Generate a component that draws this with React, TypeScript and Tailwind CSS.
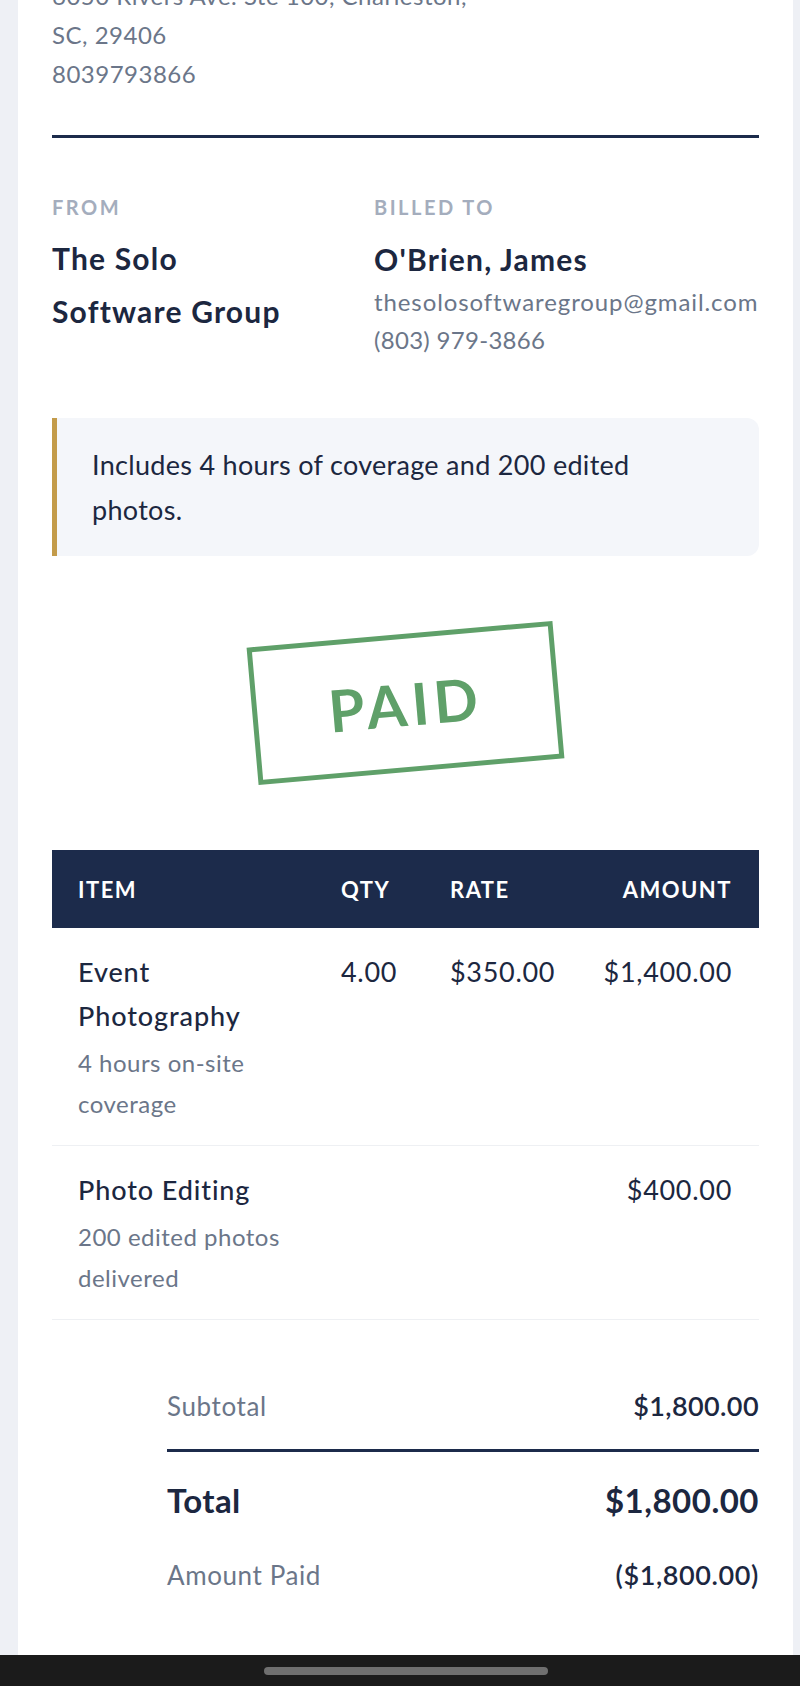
const items = [
  {
    name: "Event Photography",
    desc: "4 hours on-site coverage",
    qty: "4.00",
    rate: "$350.00",
    amount: "$1,400.00",
  },
  {
    name: "Photo Editing",
    desc: "200 edited photos delivered",
    qty: "",
    rate: "",
    amount: "$400.00",
  },
];

const Row = ({ item }: { item: (typeof items)[number] }) => {
  return (
    <div className="grid grid-cols-[263px_109px_113px_1fr] border-b border-[#eef0f3] pt-[22px] pb-[21px] text-[27px] leading-[44px] tracking-[0.7px] text-[#1c2740]">
      <div className="pl-[26px] pr-[24px]">
        <p className="font-medium tracking-[0.9px]">{item.name}</p>
        <p className="mt-[4px] text-[24px] leading-[41px] tracking-[0.5px] text-[#6b7689]">
          {item.desc}
        </p>
      </div>
      <div className="pl-[26px]">{item.qty}</div>
      <div className="pl-[26px]">{item.rate}</div>
      <div className="pr-[27px] text-right">{item.amount}</div>
    </div>
  );
};

const App = () => {
  return (
    <div className="flex h-[1686px] flex-col overflow-hidden bg-[#eef0f5] font-['Lato',sans-serif]">
      <div className="-mt-[24px] ml-[18px] mr-[7px] flex-1 bg-white px-[34px]">
        {/* business address */}
        <div className="border-b-[3px] border-[#1c2b4b] pb-[42px] text-[24px] leading-[39px] tracking-[0.5px] text-[#6b7689]">
          <p>6050 Rivers Ave. Ste 100, Charleston,</p>
          <p>SC, 29406</p>
          <p>8039793866</p>
        </div>

        <div className="flex gap-8 pt-[56px]">
          <div className="flex-1">
            <p className="text-[20px] font-bold leading-[26px] tracking-[2.5px] text-[#a4adbd]">
              FROM
            </p>
            <p className="mt-[12px] text-[30px] font-bold leading-[53px] tracking-[1.2px] text-[#1c2740]">
              The Solo
              <br />
              Software Group
            </p>
          </div>
          <div className="w-[385px] shrink-0">
            <p className="text-[20px] font-bold leading-[26px] tracking-[2.5px] text-[#a4adbd]">
              BILLED TO
            </p>
            <p className="mt-[15px] text-[30px] font-bold leading-[48px] tracking-[1.2px] text-[#1c2740]">
              O'Brien, James
            </p>
            <p className="text-[24px] leading-[38px] tracking-[0.9px] text-[#6b7689]">
              thesolosoftwaregroup@gmail.com
            </p>
            <p className="text-[24px] leading-[38px] tracking-[0.3px] text-[#6b7689]">
              (803) 979-3866
            </p>
          </div>
        </div>

        {/* note */}
        <div className="mt-[59px] rounded-r-[12px] border-l-[5px] border-[#c39b4a] bg-[#f4f6fa] pt-[24px] pb-[24px] pl-[35px] pr-[30px]">
          <p className="max-w-[570px] text-[27px] leading-[45px] tracking-[0.3px] text-[#1c2740]">
            Includes 4 hours of coverage and 200 edited photos.
          </p>
        </div>

        {/* paid stamp */}
        <div className="mt-[78px] mb-[78px] flex justify-center">
          <div className="flex h-[138px] w-[307px] -rotate-5 items-center justify-center border-[5px] border-[#5fa069]">
            <span className="text-[58px] font-bold tracking-[5px] text-[#5fa069]">
              PAID
            </span>
          </div>
        </div>

        {/* items table */}
        <div className="grid h-[78px] grid-cols-[263px_109px_113px_1fr] items-center bg-[#1c2b4b] text-[22px] font-bold tracking-[1.5px] text-white">
          <div className="pl-[26px]">ITEM</div>
          <div className="pl-[26px]">QTY</div>
          <div className="pl-[26px]">RATE</div>
          <div className="pr-[27px] text-right">AMOUNT</div>
        </div>
        {items.map((item) => (
          <Row key={item.name} item={item} />
        ))}

        {/* totals */}
        <div className="ml-auto mt-[66px] w-[592px]">
          <div className="flex items-center justify-between border-b-[3px] border-[#1c2b4b] pb-[23px] leading-[40px]">
            <span className="text-[26px] tracking-[0.6px] text-[#6b7689]">Subtotal</span>
            <span className="text-[27px] font-semibold tracking-[0.4px] text-[#1c2740]">$1,800.00</span>
          </div>
          <div className="mt-[26px] flex items-center justify-between leading-[44px] text-[#1c2740]">
            <span className="text-[33px] font-bold tracking-[0.4px]">Total</span>
            <span className="text-[33px] font-bold tracking-[0.5px]">$1,800.00</span>
          </div>
          <div className="mt-[33px] flex items-center justify-between leading-[40px]">
            <span className="text-[26px] tracking-[0.6px] text-[#6b7689]">Amount Paid</span>
            <span className="text-[27px] font-semibold tracking-[0.6px] text-[#1c2740]">($1,800.00)</span>
          </div>
        </div>
      </div>

      {/* system nav bar */}
      <div className="flex h-[31px] items-center justify-center bg-[#1b1b1b] pl-[12px]">
        <div className="h-[8px] w-[284px] rounded-full bg-[#6f6f6f]" />
      </div>
    </div>
  );
};

export default App;
